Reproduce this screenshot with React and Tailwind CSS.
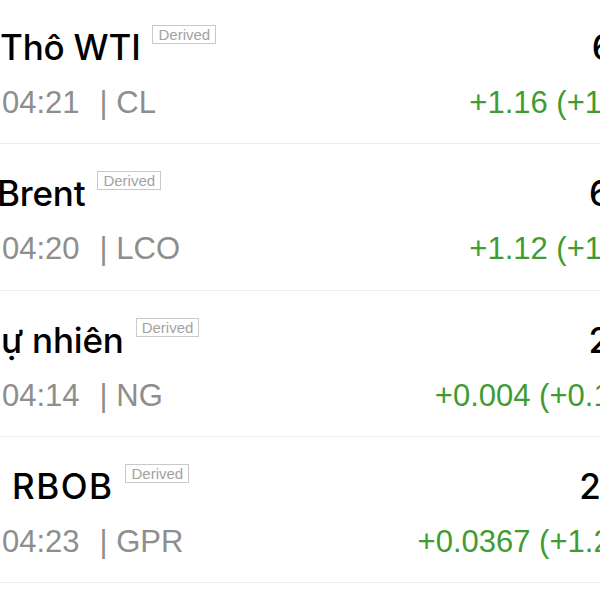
export default function App() {
  const rows = [
    { pre: "Dầu ", nameCls: "", name: "Thô WTI", time: "04:21", code: "CL", price: "66.45", priceCls: "-mr-[7px]", change: "+1.16 (+1.78%)" },
    { pre: "Dầu ", nameCls: "-ml-[3px]", name: "Brent", time: "04:20", code: "LCO", price: "69.87", priceCls: "-mr-[1px]", change: "+1.12 (+1.62%)" },
    { pre: "Khí t", nameCls: "ml-[1px]", name: "ự nhiên", time: "04:14", code: "NG", price: "2.744", priceCls: "-mr-[1px]", change: "+0.004 (+0.145%)" },
    { pre: "Xăng ", nameCls: "ml-[12px] tracking-[1.5px]", name: "RBOB", time: "04:23", code: "GPR", price: "2.0978", priceCls: "-mr-[13px]", change: "+0.0367 (+1.264%)" },
  ];
  return (
    <div className="w-[600px] h-[600px] overflow-hidden bg-white" style={{ fontFamily: '"Liberation Sans", Arial, sans-serif' }}>
      <div className="-ml-[78px] -mt-[2px] w-[777px] pr-[16px]">
        {rows.map((r) => (
          <div key={r.code} className="h-[146.3px] border-b border-[#ececec] flex justify-between whitespace-nowrap">
            <div className="flex flex-col pt-[26px]">
              <div className="flex items-start">
                <span className="text-[35px] leading-[46px] font-medium text-black font-['Inter',sans-serif] tracking-[-0.2px] flex">
                  <span className="w-[78px] overflow-hidden shrink-0 whitespace-pre">{r.pre}</span>
                  <span className={r.nameCls}>{r.name}</span>
                </span>
                <span className="ml-[12px] mt-[1px] border border-[#c9c9c9] px-[5px] text-[15px] leading-[17px] text-[#a3a3a3]">Derived</span>
              </div>
              <div className="mt-[15px] text-[31px] leading-[36px] text-[#8e8e8e] flex">
                <span className="inline-block w-[80px] overflow-hidden">05/12</span>
                <span>{r.time}</span>
                <span className="ml-[20px]">| {r.code}</span>
              </div>
            </div>
            <div className="flex flex-col items-end pt-[26px]">
              <span className={`text-[35px] leading-[46px] font-medium text-black font-['Inter',sans-serif] ${r.priceCls}`}>{r.price}</span>
              <span className="mt-[15px] text-[31px] leading-[36px] text-[#3f9c33]">{r.change}</span>
            </div>
          </div>
        ))}
      </div>
    </div>
  );
}
